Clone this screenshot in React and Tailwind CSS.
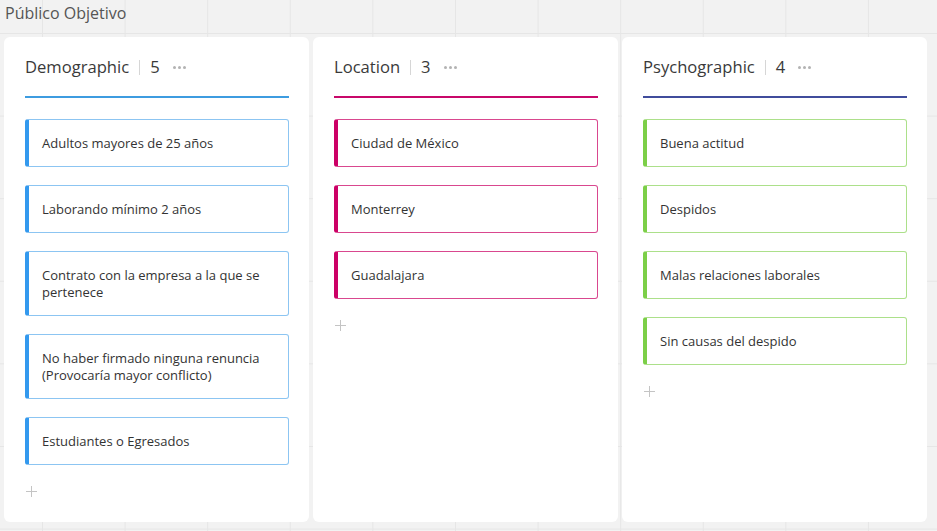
import React from 'react';

const columns = [
  {
    title: 'Demographic',
    line: 'bg-[#3d9ce0]',
    card: 'border-[#8cc5f2] border-l-[#3399ee]',
    items: [
      'Adultos mayores de 25 años',
      'Laborando mínimo 2 años',
      'Contrato con la empresa a la que se pertenece',
      'No haber firmado ninguna renuncia (Provocaría mayor conflicto)',
      'Estudiantes o Egresados',
    ],
  },
  {
    title: 'Location',
    line: 'bg-[#c8086a]',
    card: 'border-[#d9488f] border-l-[#cc0066]',
    items: ['Ciudad de México', 'Monterrey', 'Guadalajara'],
  },
  {
    title: 'Psychographic',
    line: 'bg-[#404c9c]',
    card: 'border-[#ace08a] border-l-[#7ccf48]',
    items: ['Buena actitud', 'Despidos', 'Malas relaciones laborales', 'Sin causas del despido'],
  },
];

function Column({ col }) {
  return (
    <div className="w-[305px] h-[485px] rounded-[6px] bg-white pl-[21px] pr-[20px] pt-[18px]">
      {/* Header */}
      <div className="flex items-center h-[24px] text-[16.6px] text-[#3a3a3a]">
        <span>{col.title}</span>
        <span className="mx-[10px] w-px h-[15px] bg-[#d6d6d6]" />
        <span>{col.items.length}</span>
        <span className="ml-[13px] flex gap-[2px] items-center">
          <span className="w-[3px] h-[3px] rounded-full bg-[#b3b3b3]" />
          <span className="w-[3px] h-[3px] rounded-full bg-[#b3b3b3]" />
          <span className="w-[3px] h-[3px] rounded-full bg-[#b3b3b3]" />
        </span>
      </div>
      <div className={`mt-[17px] h-[2px] ${col.line}`} />

      {/* Cards */}
      <div className="mt-[21px] flex flex-col gap-[18px]">
        {col.items.map((item) => (
          <div
            key={item}
            className={`border border-l-4 rounded-[3px] pl-[13px] pr-[10px] py-[14.5px] text-[13px] leading-[17px] text-[#333] ${col.card}`}
          >
            {item}
          </div>
        ))}
      </div>

      <div className="mt-[21px] ml-[1px] w-[11px] h-[11px] relative">
        <span className="absolute left-0 top-[5px] w-[11px] h-px bg-[#c4c4c4]" />
        <span className="absolute left-[5px] top-0 w-px h-[11px] bg-[#c4c4c4]" />
      </div>
    </div>
  );
}

export default function App() {
  return (
    <div
      className="w-full h-[531px] overflow-hidden bg-[#f2f2f2] bg-[image:linear-gradient(to_right,#e6e6e6_1px,transparent_1px),linear-gradient(to_bottom,#e6e6e6_1px,transparent_1px)] bg-[size:82.6px_82.6px] bg-[position:42px_33px]"
      style={{ fontFamily: '"Open Sans", "Noto Sans", sans-serif' }}
    >
      <div className="h-[37px] pl-[5px] pt-px text-[16px] leading-[24px] text-[#555]">Público Objetivo</div>
      <div className="flex gap-[4px] px-[4px]">
        {columns.map((col) => (
          <Column key={col.title} col={col} />
        ))}
      </div>
    </div>
  );
}
